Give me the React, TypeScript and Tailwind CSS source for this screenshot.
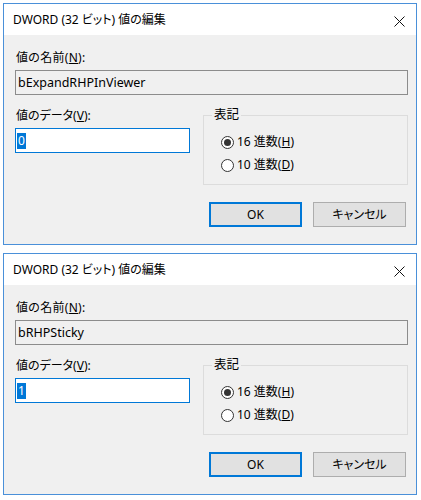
import React from "react";

const font = "[font-family:'Noto_Sans','Noto_Sans_CJK_JP',sans-serif] [font-feature-settings:'palt']";

function Radio({ checked, label, keyChar }: { checked: boolean; label: string; keyChar: string }) {
  return (
    <div className="flex items-center h-[16px] leading-[16px]">
      <span className="w-[13px] h-[13px] rounded-full border border-[#333] bg-white flex items-center justify-center">
        {checked && <span className="w-[7px] h-[7px] rounded-full bg-[#333]" />}
      </span>
      <span className="ml-[3px]">
        {label}(<span className="underline">{keyChar}</span>)
      </span>
    </div>
  );
}

function DwordDialog({ name, value }: { name: string; value: string }) {
  return (
    <div className="w-[414px] h-[242px] border border-[#4a90d9] bg-[#f0f0f0] flex flex-col text-[12px] text-black">
      <div className="h-[31px] bg-white flex items-center justify-between pl-[9px] pr-[11px]">
        <span className="leading-[16px] pt-[1px]">DWORD (32 ビット) 値の編集</span>
        <svg width="11" height="11" viewBox="0 0 11 11" className="mt-[3px]">
          <path d="M0.5 0.5 L10.5 10.5 M10.5 0.5 L0.5 10.5" stroke="#111" strokeWidth="1" fill="none" />
        </svg>
      </div>
      <div className="pl-[11px] flex flex-col">
        <div className="mt-[15px] pl-[1px] leading-[16px] tracking-[0.3px]">
          値の名前(<span className="underline">N</span>):
        </div>
        <div className="mt-[4px] w-[393px] h-[25px] border border-[#8c8c8c] bg-[#f0f0f0] flex items-center pl-[2px] leading-[16px] text-[12.5px]">
          {name}
        </div>
        <div className="flex">
          <div className="w-[175px] flex flex-col">
            <div className="mt-[13px] pl-[1px] leading-[16px]">
              値のデータ(<span className="underline">V</span>):
            </div>
            <div className="mt-[4px] w-[175px] h-[25px] border border-[#0078d7] bg-white flex items-center pl-[1px]">
              <span className="bg-[#0078d7] text-white leading-[16px] px-[1px]">{value}</span>
            </div>
          </div>
          <div className="relative ml-[13px] mt-[20px] w-[205px] h-[70px] border border-[#dcdcdc] flex flex-col pl-[17px] pt-[18px] gap-[7px]">
            <span className="absolute -top-[9px] left-[8px] px-[2px] bg-[#f0f0f0] leading-[16px] text-[12.5px]">表記</span>
            <Radio checked label="16 進数" keyChar="H" />
            <Radio checked={false} label="10 進数" keyChar="D" />
          </div>
        </div>
        <div className="mt-[17px] flex gap-[11px] pl-[194px]">
          <button className="w-[93px] h-[25px] border-2 border-[#0078d7] bg-[#e1e1e1] flex items-center justify-center leading-[16px]">
            OK
          </button>
          <button className="w-[93px] h-[25px] border border-[#adadad] bg-[#e1e1e1] flex items-center justify-center leading-[16px]">
            キャンセル
          </button>
        </div>
      </div>
    </div>
  );
}

export default function App() {
  return (
    <div className={`w-[421px] min-h-[500px] bg-white pt-[3px] pl-[3px] flex flex-col gap-[8px] ${font}`}>
      <DwordDialog name="bExpandRHPInViewer" value="0" />
      <DwordDialog name="bRHPSticky" value="1" />
    </div>
  );
}
